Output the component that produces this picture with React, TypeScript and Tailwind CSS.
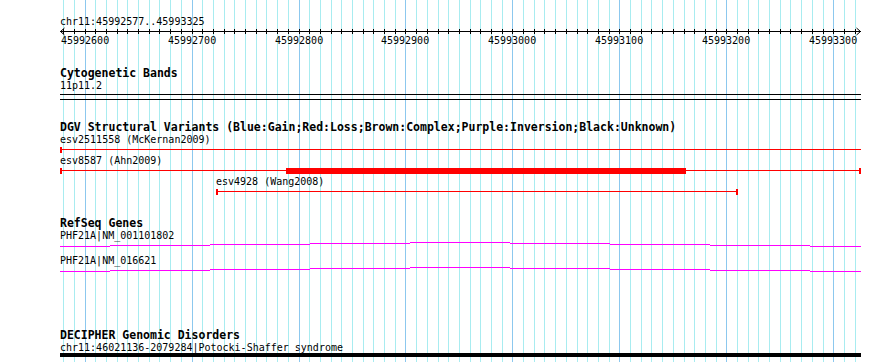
import React from 'react';

const START = 45992577;
const END = 45993325;
const X0 = 60;
const VIEW_W = 800;

const px = (bp: number) => Math.round(X0 + ((bp - START) * VIEW_W) / (END - START));

const ticks: { bp: number; x: number; major: boolean }[] = [];
for (let bp = 45992580; bp <= 45993320; bp += 10) {
  ticks.push({ bp, x: px(bp), major: bp % 100 === 0 });
}

const mono = { fontFamily: '"DejaVu Sans Mono", "Liberation Mono", monospace' };

// gene line steps: [x1, x2, dy]
const geneSteps: [number, number, number][] = [
  [60, 110, 4],
  [110, 210, 3],
  [210, 310, 2],
  [310, 410, 1],
  [410, 510, 0],
  [510, 610, 1],
  [610, 710, 2],
  [710, 810, 3],
  [810, 861, 4],
];

const Label = ({ children, className = '' }: { children: React.ReactNode; className?: string }) => (
  <div className={`pl-[60px] text-[10px] leading-[12px] text-black whitespace-nowrap ${className}`}>{children}</div>
);

const Heading = ({ children, className = '' }: { children: React.ReactNode; className?: string }) => (
  <div className={`pl-[60px] text-[11.5px] leading-[14px] font-bold text-black whitespace-nowrap ${className}`}>
    {children}
  </div>
);

const GeneLine = () => (
  <svg width={890} height={6} className="block">
    {geneSteps.map(([a, b, dy]) => (
      <rect key={a} x={a} y={dy} width={b - a} height={1} fill="#ff00ff" />
    ))}
  </svg>
);

export default function App() {
  return (
    <div className="relative w-[890px] h-[362px] overflow-hidden bg-white" style={mono}>
      {/* background grid */}
      <svg width={890} height={362} className="absolute inset-0">
        {ticks.map((t) => (
          <rect key={t.bp} x={t.x} y={0} width={1} height={362} fill={t.major ? '#8cc8ee' : '#a8ecf0'} />
        ))}
      </svg>

      <div className="relative">
        <Label className="pt-[16px]">chr11:45992577..45993325</Label>

        {/* ruler */}
        <svg width={890} height={7} className="block overflow-visible">
          <rect x={60} y={3} width={801} height={1} fill="#000" />
          <polyline points="64.5,0 60.5,3.5 64.5,7" fill="none" stroke="#000" strokeWidth={1} />
          <polyline points="856.5,0 860.5,3.5 856.5,7" fill="none" stroke="#000" strokeWidth={1} />
          {ticks.map((t) => (
            <rect key={t.bp} x={t.x} y={1} width={1} height={5} fill="#000" />
          ))}
        </svg>
        <div className="relative h-[12px] text-[10px] leading-[12px]">
          {ticks
            .filter((t) => t.major)
            .map((t) => (
              <span key={t.bp} className="absolute top-0 w-[48px] text-center" style={{ left: t.x - 24 }}>
                {t.bp}
              </span>
            ))}
        </div>

        <Heading className="mt-[19px]">Cytogenetic Bands</Heading>
        <Label>11p11.2</Label>
        <svg width={890} height={8} className="block">
          <rect x={60} y={2} width={801} height={1} fill="#000" />
          <rect x={60} y={7} width={801} height={1} fill="#000" />
        </svg>

        <Heading className="mt-[20px]">
          DGV Structural Variants (Blue:Gain;Red:Loss;Brown:Complex;Purple:Inversion;Black:Unknown)
        </Heading>
        <Label>esv2511558 (McKernan2009)</Label>
        <svg width={890} height={8} className="block">
          <rect x={60} y={3} width={801} height={1} fill="#ff0000" />
          <rect x={60} y={1} width={2} height={6} fill="#ff0000" />
        </svg>
        <Label className="mt-[1px]">esv8587 (Ahn2009)</Label>
        <svg width={890} height={8} className="block">
          <rect x={60} y={3} width={800} height={1} fill="#ff0000" />
          <rect x={286} y={1} width={400} height={6} fill="#ff0000" />
          <rect x={60} y={1} width={2} height={6} fill="#ff0000" />
          <rect x={859} y={1} width={2} height={6} fill="#ff0000" />
        </svg>
        <div className="mt-[1px] pl-[216px] text-[10px] leading-[12px] whitespace-nowrap">esv4928 (Wang2008)</div>
        <svg width={890} height={8} className="block">
          <rect x={216} y={3} width={522} height={1} fill="#ff0000" />
          <rect x={216} y={1} width={2} height={6} fill="#ff0000" />
          <rect x={736} y={1} width={2} height={6} fill="#ff0000" />
        </svg>

        <Heading className="mt-[20px]">RefSeq Genes</Heading>
        <Label>PHF21A|NM_001101802</Label>
        <GeneLine />
        <Label className="mt-[7px]">PHF21A|NM_016621</Label>
        <GeneLine />

        <Heading className="mt-[55px]">DECIPHER Genomic Disorders</Heading>
        <Label>chr11:46021136-2079284|Potocki-Shaffer syndrome</Label>
        <div className="-mt-px ml-[60px] w-[801px] h-[4px] bg-black" />
      </div>
    </div>
  );
}
